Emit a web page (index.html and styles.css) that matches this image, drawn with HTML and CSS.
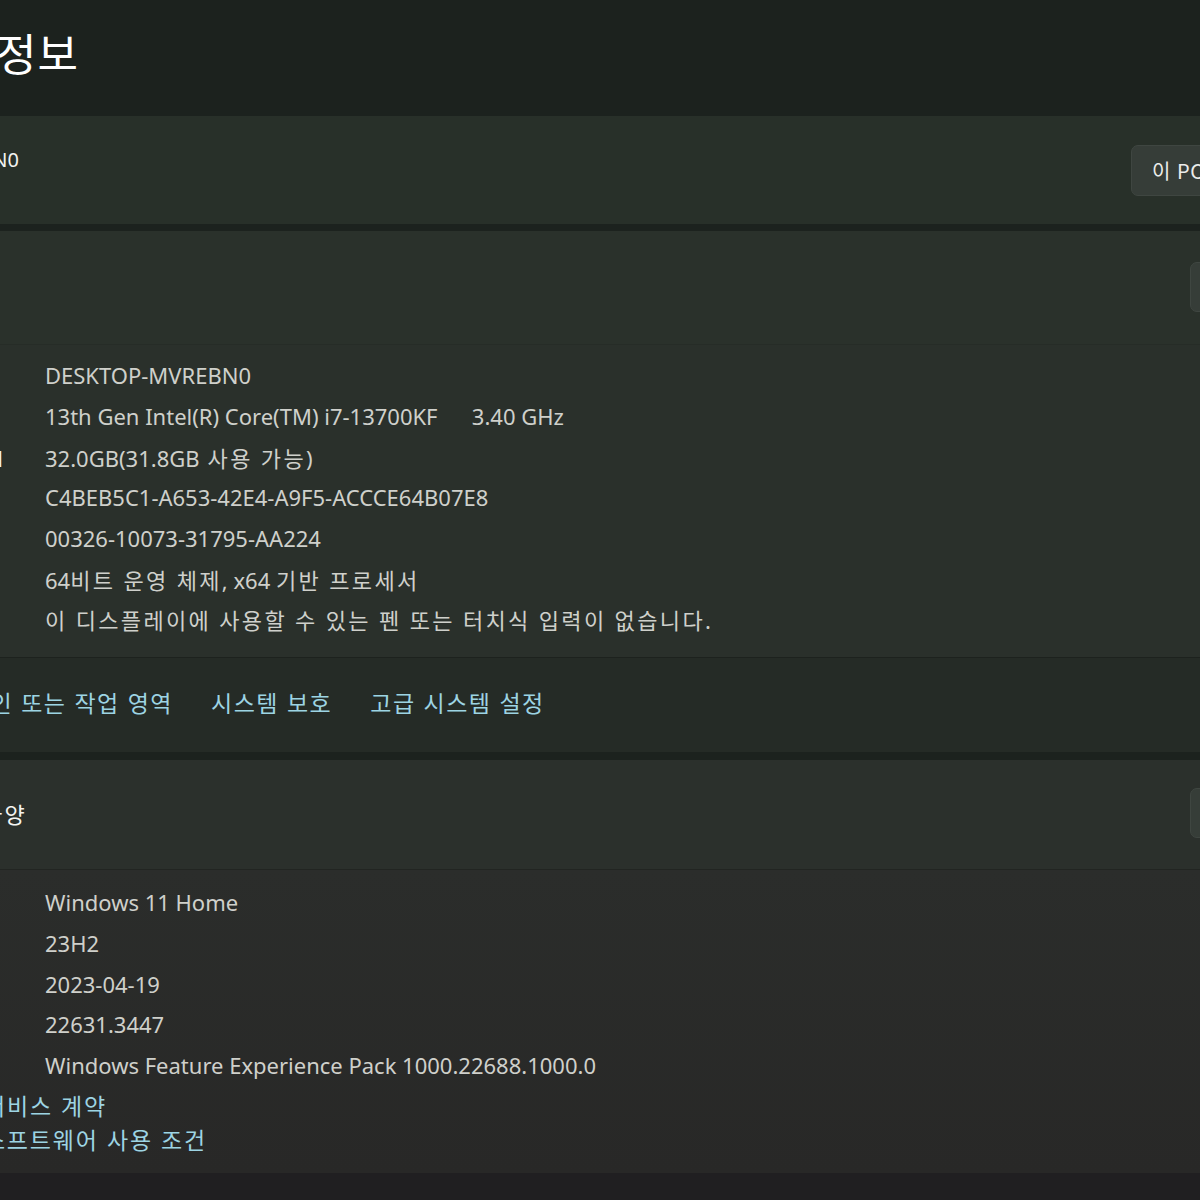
FILE: index.html
```html
<!DOCTYPE html>
<html lang="ko">
<head>
<meta charset="utf-8">
<title>정보</title>
<link rel="stylesheet" href="styles.css">
</head>
<body>
<div class="page">
  <header class="title">
    <div class="title-box"><span class="crumb">시스템</span><span class="chev">›</span><span class="cur">정보</span></div>
  </header>

  <section class="card device">
    <div class="device-name-box"><span class="device-name">DESKTOP-MVREBN0</span></div>
    <div class="device-gap"></div>
    <button class="btn rename">이 PC의 이름 바꾸기</button>
  </section>

  <section class="card spec">
    <div class="spec-head head-device">
      <div class="head-box head-box-device">
        <svg class="head-icon" width="22" height="22" viewBox="0 0 22 22"><rect x="2" y="3" width="18" height="12" rx="1.5" fill="none" stroke="#ffffff" stroke-width="1.5"/><path d="M8 19h6M11 15v4" stroke="#ffffff" stroke-width="1.5"/></svg>
        <span class="head-title">장치 사양</span>
      </div>
      <button class="btn head-btn head-btn-device">복사 <svg width="14" height="14" viewBox="0 0 14 14"><path d="M3 9l4-4 4 4" fill="none" stroke="#ffffff" stroke-width="1.3"/></svg></button>
    </div>
    <div class="spec-body spec-body-device">
      <div class="row"><span class="label">장치 이름</span><span class="value">DESKTOP-MVREBN0</span></div>
      <div class="row"><span class="label">프로세서</span><span class="value">13th Gen Intel(R) Core(TM) i7-13700KF&nbsp;&nbsp;&nbsp;&nbsp;&nbsp;&nbsp;3.40 GHz</span></div>
      <div class="row"><span class="label">설치된 RAM</span><span class="value">32.0GB(31.8GB<span class="ko"> 사용 가능</span>)</span></div>
      <div class="row"><span class="label">장치 ID</span><span class="value">C4BEB5C1-A653-42E4-A9F5-ACCCE64B07E8</span></div>
      <div class="row"><span class="label">제품 ID</span><span class="value">00326-10073-31795-AA224</span></div>
      <div class="row"><span class="label">시스템 종류</span><span class="value">64<span class="ko">비트 운영 체제</span>, x64 <span class="ko">기반 프로세서</span></span></div>
      <div class="row"><span class="label">펜 및 터치</span><span class="value ko">이 디스플레이에 사용할 수 있는 펜 또는 터치식 입력이 없습니다.</span></div>
    </div>
    <div class="related">
      <div class="related-box"><span class="related-label">관련 링크</span><a class="link">도메인 또는 작업 영역</a></div>
      <a class="link">시스템 보호</a>
      <a class="link">고급 시스템 설정</a>
    </div>
  </section>

  <section class="card spec win">
    <div class="spec-head head-win">
      <div class="head-box head-box-win">
        <svg class="head-icon" width="22" height="22" viewBox="0 0 22 22"><path d="M2 2h8.5v8.5H2zM11.5 2H20v8.5h-8.5zM2 11.5h8.5V20H2zM11.5 11.5H20V20h-8.5z" fill="#ffffff"/></svg>
        <span class="head-title">Windows 사양</span>
      </div>
      <button class="btn head-btn head-btn-win">복사 <svg width="14" height="14" viewBox="0 0 14 14"><path d="M3 9l4-4 4 4" fill="none" stroke="#ffffff" stroke-width="1.3"/></svg></button>
    </div>
    <div class="spec-body spec-body-win">
      <div class="row"><span class="label">에디션</span><span class="value">Windows 11 Home</span></div>
      <div class="row"><span class="label">버전</span><span class="value">23H2</span></div>
      <div class="row"><span class="label">설치 날짜</span><span class="value">2023-04-19</span></div>
      <div class="row"><span class="label">OS 빌드</span><span class="value">22631.3447</span></div>
      <div class="row"><span class="label">경험</span><span class="value">Windows Feature Experience Pack 1000.22688.1000.0</span></div>
      <div class="legal">
        <div class="legal-box legal-a"><a class="link legal-link">Microsoft 서비스 계약</a></div>
        <div class="legal-box legal-b"><a class="link legal-link">Microsoft 소프트웨어 사용 조건</a></div>
      </div>
    </div>
  </section>

  <footer class="bottom"></footer>
</div>
</body>
</html>
```

FILE: styles.css
```css
html, body {
  margin: 0;
  padding: 0;
}
body {
  width: 1200px;
  height: 1200px;
  overflow: hidden;
  background: #1c221e;
  font-family: "Noto Sans", "Noto Sans CJK KR", sans-serif;
  color: #ffffff;
}
.page {
  margin-left: -400px;
  width: 1700px;
}

/* title */
.title {
  height: 116px;
  display: flex;
  align-items: flex-start;
}
.title-box {
  flex: 0 0 479px;
  height: 104px;
  display: flex;
  justify-content: flex-end;
  align-items: center;
  white-space: nowrap;
  font-size: 44px;
  line-height: 60px;
  letter-spacing: 1px;
  font-family: "Noto Sans CJK KR", sans-serif;
}
.crumb { color: #c8c8c8; }
.chev { margin: 0 18px; color: #c8c8c8; }

/* cards */
.card {
  background: #283029;
}
.device {
  height: 108px;
  box-sizing: border-box;
  padding-top: 29px;
  display: flex;
  align-items: flex-start;
}
.device-name-box {
  flex: 0 0 419px;
  display: flex;
  justify-content: flex-end;
  white-space: nowrap;
  margin-top: 1px;
}
.device-name {
  font-size: 20px;
  line-height: 28px;
  color: #f2f2f0;
}
.device-gap { flex: 0 0 1112px; }

.btn {
  font-family: "Noto Sans CJK KR", sans-serif;
  background: #363d38;
  border: 1px solid #3f4641;
  border-radius: 7px;
  color: #ecedeb;
  white-space: nowrap;
  display: flex;
  align-items: center;
  gap: 10px;
}
.rename {
  height: 51px;
  padding: 0 20px;
  font-size: 20px;
  letter-spacing: 0.5px;
}

.spec {
  margin-top: 7px;
}
.spec-head {
  display: flex;
  align-items: center;
  background: #2a312b;
  border-bottom: 1px solid #262c27;
  box-sizing: border-box;
}
.head-device { height: 114px; }
.head-win {
  height: 110px;
  padding-bottom: 3px;
  background: #2b302c;
  border-bottom-color: #222522;
}
.head-box {
  display: flex;
  justify-content: flex-end;
  align-items: center;
  gap: 22px;
  white-space: nowrap;
  font-size: 22px;
  letter-spacing: 2.3px;
  font-family: "Noto Sans CJK KR", sans-serif;
}
.head-box-device { flex: 0 0 340px; }
.head-box-win { flex: 0 0 427px; }
.head-title { color: #f4f4f2; }
.head-btn {
  height: 50px;
  padding: 0 20px;
  font-size: 20px;
}
.head-btn-device { margin-left: 1250px; margin-top: -1px; }
.head-btn-win { margin-left: 1163px; }

.spec-body {
  box-sizing: border-box;
  padding-left: 289px;
}
.spec-body-device {
  background: #2a302b;
  height: 312px;
  padding-top: 10px;
}
.spec-body-win {
  background: linear-gradient(#2b2d2b, #282827);
  height: 303px;
  padding-top: 12px;
}
.row {
  display: grid;
  grid-template-columns: 156px 1fr;
  height: 40.7px;
  align-items: center;
  white-space: nowrap;
  font-size: 22px;
}
.label { color: #f4f4f2; }
.value { color: #cfd0cb; }
.ko { letter-spacing: 2.35px; }

.related {
  display: flex;
  align-items: center;
  height: 95px;
  box-sizing: border-box;
  padding-bottom: 6px;
  background: #252b26;
  border-top: 1px solid #1d221e;
  gap: 38px;
  white-space: nowrap;
}
.related-box {
  flex: 0 0 573px;
  display: flex;
  justify-content: flex-end;
  gap: 40px;
}
.related-label { font-size: 22px; color: #f2f2f0; }
.link {
  color: #9dd4e3;
  font-size: 23px;
  letter-spacing: 1.5px;
  font-family: "Noto Sans CJK KR", sans-serif;
  text-decoration: none;
}
.legal-link { letter-spacing: 1.8px; }

.legal {
  margin-left: -289px;
  margin-top: 3px;
}
.legal-box {
  display: flex;
  justify-content: flex-end;
  height: 34px;
  align-items: center;
  white-space: nowrap;
}
.legal-a { width: 507px; }
.legal-b { width: 607px; }

.win { margin-top: 8px; }

.bottom {
  height: 40px;
  background: #201f21;
}
```
